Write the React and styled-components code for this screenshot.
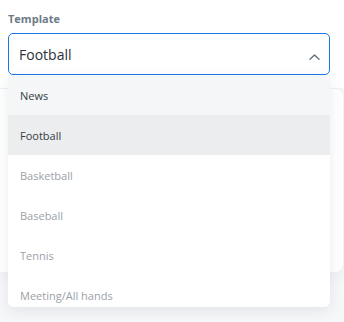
import React from "react"
import styled, { createGlobalStyle } from "styled-components"

const GlobalStyle = createGlobalStyle`
  html, body {
    margin: 0;
    padding: 0;
    background: #f6f7f9;
    font-family: "Open Sans", "Noto Sans", sans-serif;
  }
`

const Page = styled.div`
  width: 344px;
  height: 322px;
  overflow: hidden;
  position: relative;
`

const Header = styled.div`
  background: #ffffff;
  padding: 11px 14px 0 8px;
  height: 88px;
  box-sizing: border-box;
  position: relative;
`

const Label = styled.div`
  font-size: 11px;
  font-weight: 700;
  color: #6d7a88;
  line-height: 16px;
  margin-bottom: 6px;
`

const Field = styled.div`
  position: relative;
`

const SelectBox = styled.div`
  height: 42px;
  box-sizing: border-box;
  border: 1px solid #1a78e6;
  border-radius: 5px;
  display: flex;
  align-items: center;
  justify-content: space-between;
  padding: 0 9px 0 10px;
  background: #fff;
  font-size: 14px;
  color: #2c3038;
`

const Chevron = styled.svg`
  width: 11px;
  height: 6px;
  margin-top: 5px;
`

const Menu = styled.ul`
  position: absolute;
  top: 42px;
  left: 0;
  right: 0;
  margin: 0;
  padding: 0;
  list-style: none;
  background: #fff;
  max-height: 232px;
  overflow: hidden;
  border-radius: 0 0 6px 6px;
  box-shadow: 0 4px 14px rgba(30, 40, 60, 0.09);
  z-index: 5;
`

const Option = styled.li`
  height: 40px;
  display: flex;
  align-items: center;
  padding-left: 12px;
  font-size: 11px;
  color: ${p => (p.$muted ? "#9ba1a8" : "#363b42")};
  background: ${p =>
    p.$selected ? "#ecedef" : p.$active ? "#f5f6f8" : "#ffffff"};
`

const Card = styled.div`
  width: 343px;
  height: 183px;
  background: #ffffff;
  border-top: 1px solid #f0f1f3;
  border-radius: 0 8px 8px 0;
  box-shadow: 0 4px 16px rgba(30, 40, 60, 0.05);
`

const options = [
  { label: "News", active: true },
  { label: "Football", selected: true },
  { label: "Basketball", muted: true },
  { label: "Baseball", muted: true },
  { label: "Tennis", muted: true },
  { label: "Meeting/All hands", muted: true },
]

export default function App() {
  return (
    <Page>
      <GlobalStyle />
      <Header>
        <Label>Template</Label>
        <Field>
          <SelectBox>
            <span>Football</span>
            <Chevron viewBox="0 0 11 6">
              <path
                d="M1 5.2 L5.5 1 L10 5.2"
                fill="none"
                stroke="#66717e"
                strokeWidth="1.4"
                strokeLinecap="round"
                strokeLinejoin="round"
              />
            </Chevron>
          </SelectBox>
          <Menu>
            {options.map(o => (
              <Option
                key={o.label}
                $active={o.active}
                $selected={o.selected}
                $muted={o.muted}
              >
                {o.label}
              </Option>
            ))}
          </Menu>
        </Field>
      </Header>
      <Card />
    </Page>
  )
}
